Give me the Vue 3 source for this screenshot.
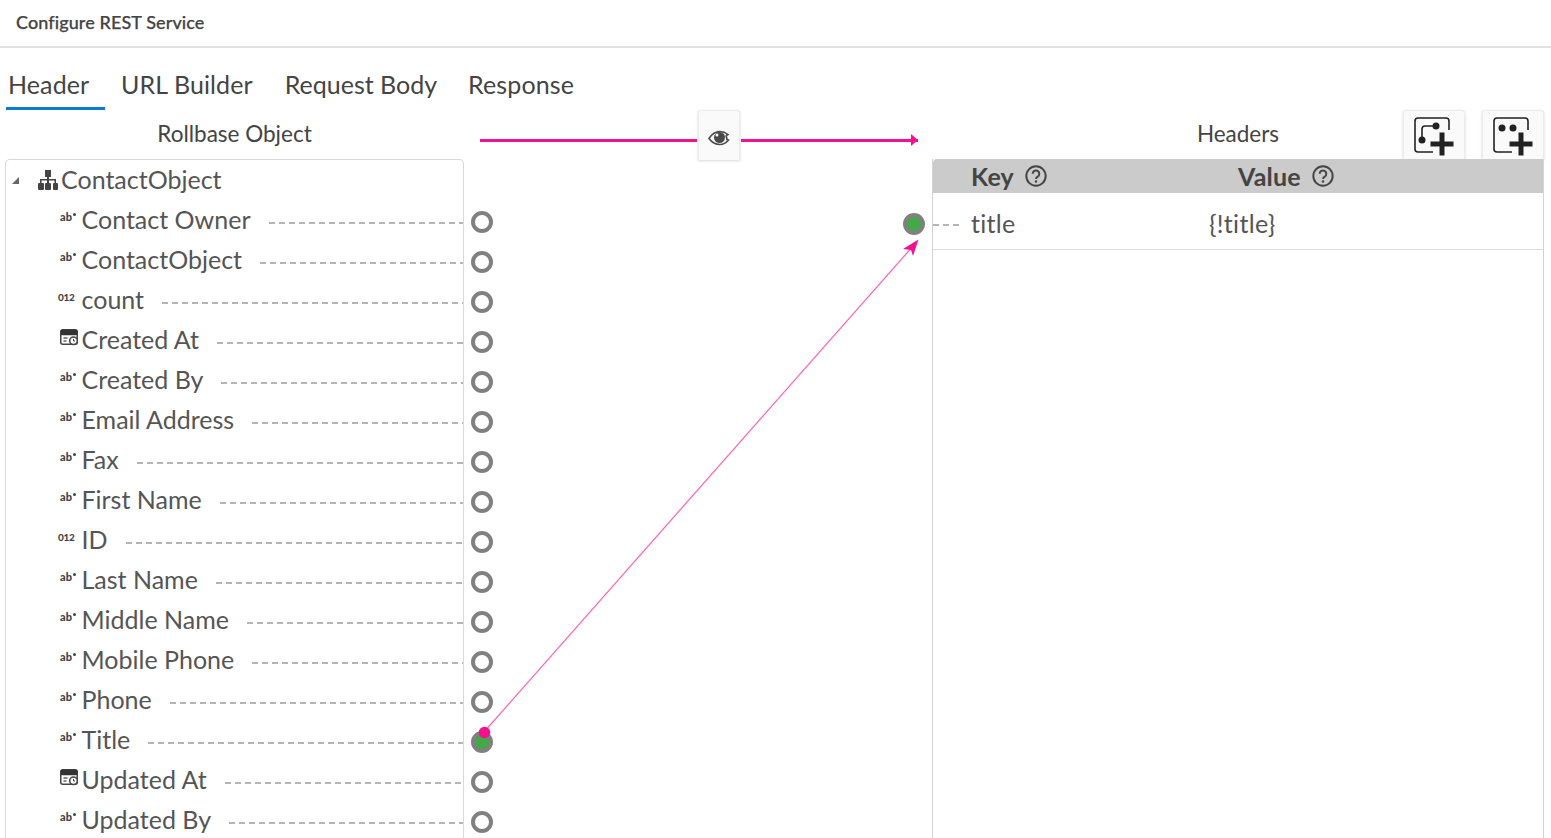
<script setup>
const fields = [
  { name: 'Contact Owner', type: 'text' },
  { name: 'ContactObject', type: 'text' },
  { name: 'count', type: 'num' },
  { name: 'Created At', type: 'date' },
  { name: 'Created By', type: 'text' },
  { name: 'Email Address', type: 'text' },
  { name: 'Fax', type: 'text' },
  { name: 'First Name', type: 'text' },
  { name: 'ID', type: 'num' },
  { name: 'Last Name', type: 'text' },
  { name: 'Middle Name', type: 'text' },
  { name: 'Mobile Phone', type: 'text' },
  { name: 'Phone', type: 'text' },
  { name: 'Title', type: 'text', linked: true },
  { name: 'Updated At', type: 'date' },
  { name: 'Updated By', type: 'text' }
]
const tabs = ['Header', 'URL Builder', 'Request Body', 'Response']
</script>

<template>
  <div class="page">
    <header class="title">Configure REST Service</header>

    <nav class="tabs">
      <a v-for="(t, i) in tabs" :key="t" class="tab" :class="{ active: i === 0 }">{{ t }}</a>
    </nav>

    <main class="mapper">
      <section class="source">
        <div class="col-head">Rollbase Object</div>
        <div class="tree">
          <div class="root-row">
            <span class="caret"></span>
            <svg class="org" width="20" height="20" viewBox="0 0 20 20">
              <path d="M7 0h6v7h-2v2h7v4h-1.500v-2.500h-5.500V13h-2v-2.500H3.500V13H2V9h7V7H7z" fill="#444" />
              <rect x="0" y="13" width="6" height="7" rx="1" fill="#444" />
              <rect x="7" y="13" width="6" height="7" rx="1" fill="#444" />
              <rect x="15" y="13" width="5" height="7" rx="1" fill="#444" />
            </svg>
            <span class="label">ContactObject</span>
          </div>
          <div v-for="f in fields" :key="f.name" class="row">
            <span class="type-slot">
              <span v-if="f.type === 'text'" class="type-text">ab<i></i></span>
              <span v-else-if="f.type === 'num'" class="type-num">012</span>
              <svg v-else class="type-date" width="19" height="17" viewBox="0 0 19 17">
                <rect x="0.750" y="0.750" width="16.500" height="14.500" rx="2" fill="#fff" stroke="#444" stroke-width="1.500" />
                <rect x="0.750" y="0.750" width="16.500" height="5.500" rx="1.500" fill="#333" />
                <path d="M3.500 9h4M3.500 12h3" stroke="#666" stroke-width="1.500" />
                <circle cx="13.500" cy="11.800" r="3.800" fill="#fff" stroke="#444" stroke-width="1.500" />
                <path d="M13.500 10.100v1.900h1.500" stroke="#444" fill="none" />
              </svg>
            </span>
            <span class="label">{{ f.name }}</span>
            <span class="dash"></span>
          </div>
        </div>
      </section>

      <section class="middle">
        <div class="mid-head">
          <span class="pink-line left"></span>
          <button class="tool eye-btn" aria-label="Show">
            <svg width="22" height="16" viewBox="0 0 22 16">
              <path d="M1 8.500C3.500 4.500 7 1.500 12 1.500c3 0 5.500 1 8 3-1 .5-1.500 1-2 1.500.8 1.200 1 2.300.8 3.300l1.700 .7c-2.500 3-5.500 4.500-8.500 4.500-4.500 0-8.500-2.500-11-6z" fill="none" stroke="#4a4a4a" stroke-width="1.600" />
              <circle cx="11.500" cy="7.500" r="5.500" fill="#4a4a4a" />
              <circle cx="9" cy="5" r="1.500" fill="#fff" />
            </svg>
          </button>
          <span class="pink-line right"></span>
        </div>
        <div class="pin-area">
          <div class="pins">
            <span v-for="f in fields" :key="f.name" class="pin" :class="{ on: f.linked }"></span>
          </div>
          <div class="pins target">
            <span class="pin on"></span>
          </div>
        </div>
      </section>

      <section class="target-col">
        <div class="target-head">
          <span></span>
          <span class="head-label">Headers</span>
          <div class="tools">
            <button class="tool add" aria-label="Add mapping">
              <svg width="62" height="50" viewBox="0 0 62 50">
                <path d="M30 42H15a3 3 0 0 1-3-3V11a3 3 0 0 1 3-3h28a3 3 0 0 1 3 3v9" fill="none" stroke="#222" stroke-width="1.600" />
                <path d="M19 30V19a3 3 0 0 1 3-3h11" fill="none" stroke="#222" stroke-width="1.600" />
                <circle cx="33" cy="16" r="3.500" fill="#222" />
                <circle cx="19" cy="30" r="3.500" fill="#222" />
                <path d="M27.500 34h23M39 22.500v23" stroke="#222" stroke-width="5" />
              </svg>
            </button>
            <button class="tool add" aria-label="Add field">
              <svg width="62" height="50" viewBox="0 0 62 50">
                <path d="M30 42H15a3 3 0 0 1-3-3V11a3 3 0 0 1 3-3h28a3 3 0 0 1 3 3v9" fill="none" stroke="#222" stroke-width="1.600" />
                <circle cx="20" cy="18" r="3.500" fill="#222" />
                <circle cx="31" cy="18" r="3.500" fill="#222" />
                <path d="M27.500 34h23M39 22.500v23" stroke="#222" stroke-width="5" />
              </svg>
            </button>
          </div>
        </div>
        <div class="table">
          <div class="thead">
            <div class="th key">
              Key
              <svg class="help" width="22" height="22" viewBox="0 0 20 20">
                <circle cx="10" cy="10" r="8.800" fill="none" stroke="#444" stroke-width="1.800" />
                <path d="M7 8a3 3 0 1 1 4.600 2.500c-1 .6-1.600 1.100-1.600 2.200" fill="none" stroke="#444" stroke-width="1.800" />
                <circle cx="10" cy="15" r="1.100" fill="#444" />
              </svg>
            </div>
            <div class="th">
              Value
              <svg class="help" width="22" height="22" viewBox="0 0 20 20">
                <circle cx="10" cy="10" r="8.800" fill="none" stroke="#444" stroke-width="1.800" />
                <path d="M7 8a3 3 0 1 1 4.600 2.500c-1 .6-1.600 1.100-1.600 2.200" fill="none" stroke="#444" stroke-width="1.800" />
                <circle cx="10" cy="15" r="1.100" fill="#444" />
              </svg>
            </div>
          </div>
          <div class="tr">
            <span class="row-dash"></span>
            <div class="td key">title</div>
            <div class="td">{!title}</div>
          </div>
        </div>
      </section>

      <svg class="wires" width="1551" height="728" viewBox="0 110 1551 728">
        <line x1="484" y1="732" x2="914" y2="245" stroke="#ff5fb4" stroke-width="1.200" />
        <circle cx="484.500" cy="732.500" r="5.800" fill="#f5108f" />
        <path d="M918.500 239.500 L903 249 L911 250 L913 256 Z" fill="#f5108f" />
      </svg>
    </main>
  </div>
</template>

<style>
html, body { margin: 0; background: #fff; }
</style>

<style scoped>
.page {
  width: 1551px;
  height: 838px;
  overflow: hidden;
  font-family: Lato, "Liberation Sans", sans-serif;
  font-variant-ligatures: none;
  color: #444;
  background: #fff;
}
.title {
  height: 46px;
  line-height: 45px;
  padding-left: 16px;
  font-size: 18px;
  font-weight: 500;
  letter-spacing: 0.1px;
  -webkit-text-stroke: 0.25px #444;
  border-bottom: 2px solid #e2e2e2;
  box-sizing: content-box;
}
.tabs {
  display: flex;
  height: 62px;
  padding-left: 6px;
  box-sizing: border-box;
}
.tab {
  display: block;
  padding: 20px 16px 0 3px;
  font-size: 25px;
  line-height: 32px;
  letter-spacing: 0.1px;
  color: #444;
  height: 62px;
  box-sizing: border-box;
  margin-right: 13px;
}
.tab:first-child { width: 99px; padding-left: 2px; padding-right: 0; }
.tab:nth-child(3) { letter-spacing: 0; margin-right: 12px; }
.tab.active {
  border-bottom: 3px solid #0a7cc9;
}
.mapper {
  position: relative;
  display: flex;
  padding-left: 5px;
  height: 728px;
}
.source { width: 459px; flex: none; }
.col-head {
  height: 49px;
  line-height: 48px;
  text-align: center;
  font-size: 22.500px;
  color: #444;
}
.tree {
  border: 1px solid #d9d9d9;
  border-bottom: 0;
  border-top-left-radius: 5px;
  border-top-right-radius: 5px;
  height: 680px;
  box-sizing: border-box;
  font-size: 25px;
  color: #555;
}
.root-row, .row {
  height: 40px;
  display: flex;
  align-items: center;
  line-height: 40px;
}
.caret {
  width: 0;
  height: 0;
  margin-left: 6px;
  border-style: solid;
  border-width: 0 0 7px 7px;
  border-color: transparent transparent #666 transparent;
}
.org { margin-left: 19px; margin-right: 3px; margin-top: -1px; }
.row { padding-left: 52px; }
.type-slot {
  width: 24px;
  flex: none;
  display: flex;
  align-items: center;
  height: 40px;
}
.type-text {
  position: relative;
  margin-left: 2px;
  margin-top: -7px;
  font-size: 11px;
  line-height: 12px;
  font-weight: 900;
  color: #444;
}
.type-text i {
  display: inline-block;
  width: 3px;
  height: 3px;
  margin-left: 1px;
  vertical-align: 5px;
  border-radius: 50%;
  background: #444;
}
.type-num {
  margin-top: -7px;
  font-size: 10px;
  line-height: 12px;
  font-weight: 900;
  letter-spacing: -0.3px;
  color: #444;
}
.type-date { margin-left: 2px; margin-top: -6px; }
.label { flex: none; margin-top: -2px; }
.row .label { margin-left: -0.500px; }
.dash {
  flex: 1;
  margin-left: 18px;
  margin-top: 5px;
  height: 2px;
  background: repeating-linear-gradient(90deg, #b5b5b5 0 6px, transparent 6px 10px);
}
.middle { width: 468px; flex: none; }
.mid-head {
  height: 50px;
  display: flex;
  padding-left: 16px;
}
.pink-line {
  height: 3px;
  margin-top: 29px;
  background: #f5108f;
}
.pink-line.left { width: 217px; }
.pink-line.right { position: relative; width: 177px; }
.pink-line.right::after {
  content: "";
  position: absolute;
  right: 0;
  top: -5px;
  border-style: solid;
  border-width: 6.500px 0 6.500px 7px;
  border-color: transparent transparent transparent #f5108f;
}
.tool {
  display: block;
  padding: 0;
  margin: 0;
  border: 1px solid #ececec;
  border-bottom: 0;
  border-radius: 3px 3px 0 0;
  background: #fafafa;
  box-shadow: 0 1px 3px rgba(0, 0, 0, 0.16);
  box-sizing: border-box;
  height: 50px;
}
.eye-btn {
  width: 42px;
  margin: 0 1px;
  display: flex;
  align-items: center;
  justify-content: center;
  padding-top: 4px;
}
.pin-area {
  display: flex;
  justify-content: space-between;
  padding: 0 7px;
}
.pins {
  display: flex;
  flex-direction: column;
  gap: 18px;
  padding-top: 51px;
}
.pins.target { padding-top: 53px; }
.pin {
  display: block;
  width: 22px;
  height: 22px;
  box-sizing: border-box;
  border: 4px solid #808080;
  border-radius: 50%;
  background: #fff;
}
.pin.on { background: #43a948; }
.target-col { width: 612px; flex: none; }
.target-head {
  height: 49px;
  display: grid;
  grid-template-columns: 1fr auto 1fr;
  align-items: start;
}
.head-label {
  font-size: 22.500px;
  line-height: 48px;
  color: #444;
}
.tools {
  display: flex;
  justify-content: flex-end;
  gap: 17px;
}
.add { width: 62px; overflow: hidden; }
.add svg { display: block; margin: -1px 0 0 -1px; }
.table {
  position: relative;
  height: 679px;
  border-left: 1px solid #d4d4d4;
  border-right: 1px solid #d4d4d4;
  box-sizing: border-box;
}
.thead {
  display: flex;
  height: 34px;
  background: #cbcbcb;
  align-items: center;
  border-top-left-radius: 4px;
}
.th {
  display: flex;
  align-items: center;
  gap: 11px;
  font-size: 25px;
  font-weight: 700;
  letter-spacing: 0.2px;
  color: #444;
}
.th.key { width: 305px; padding-left: 38px; box-sizing: border-box; }
.tr {
  position: relative;
  display: flex;
  align-items: center;
  height: 57px;
  padding-top: 4px;
  font-size: 25px;
  letter-spacing: 0.3px;
  color: #555;
  border-bottom: 1px solid #dcdcdc;
  box-sizing: border-box;
}
.row-dash {
  position: absolute;
  left: 0;
  top: 31px;
  width: 27px;
  height: 2px;
  background: repeating-linear-gradient(90deg, #b5b5b5 0 6px, transparent 6px 10px);
}
.td.key { width: 276px; padding-left: 38px; box-sizing: border-box; }
.wires {
  position: absolute;
  left: 0;
  top: 0;
  pointer-events: none;
}
</style>
